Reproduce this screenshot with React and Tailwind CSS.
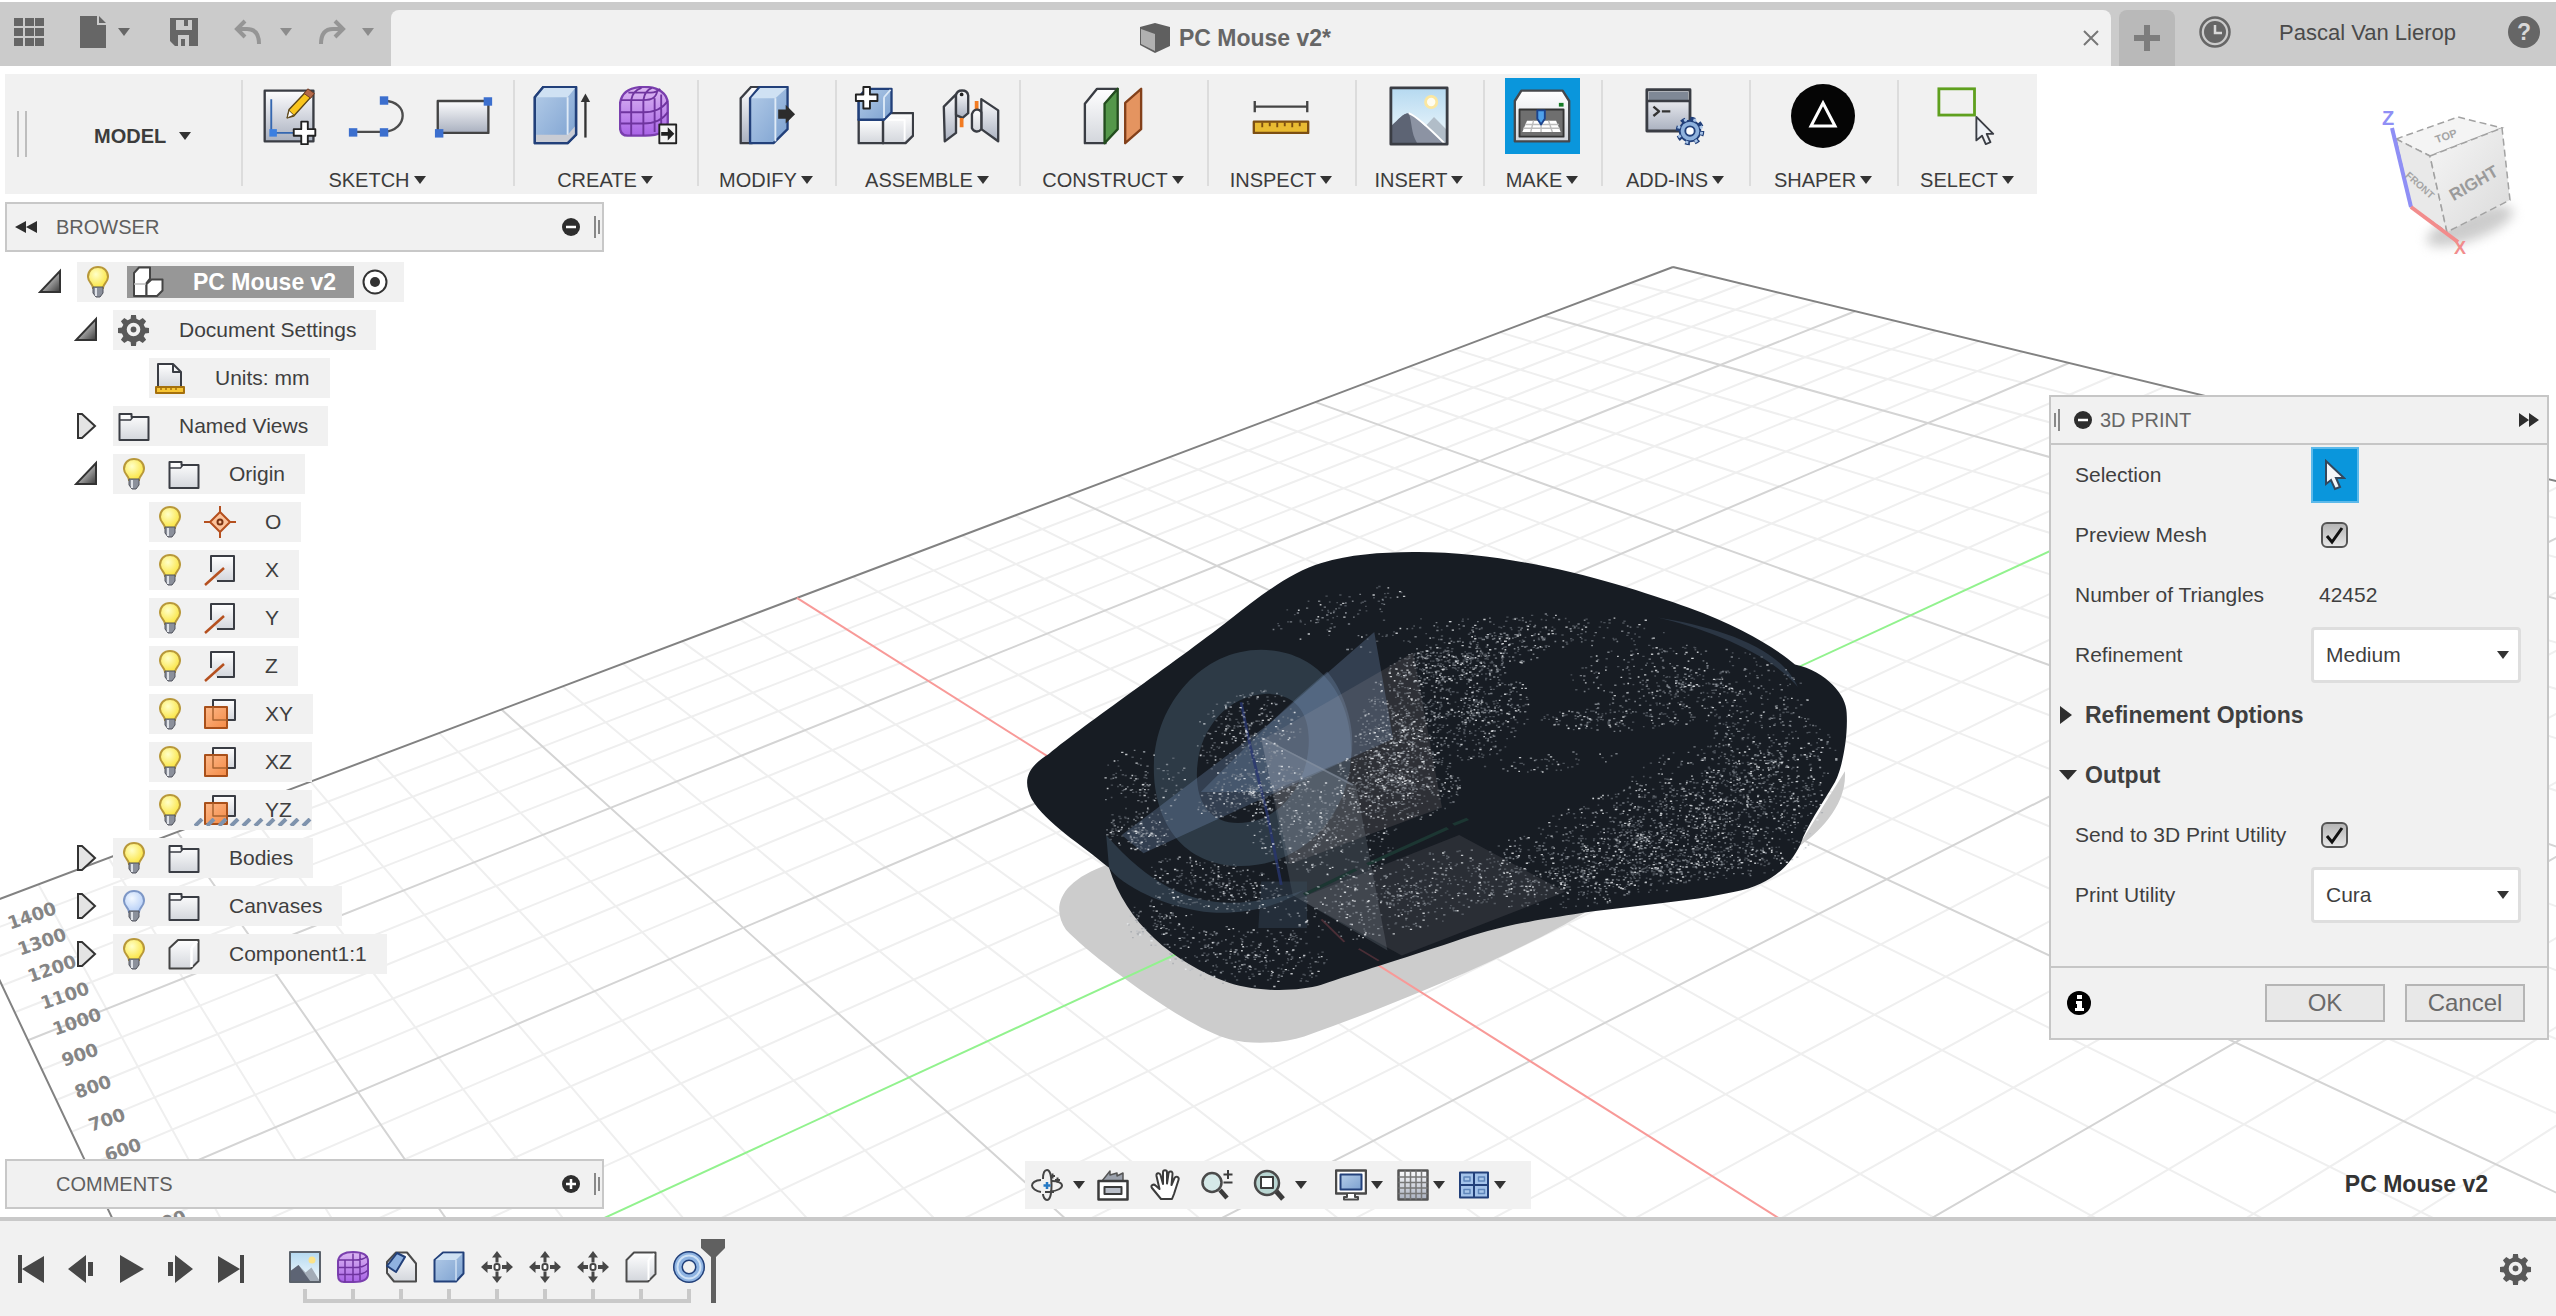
import React from "react";

/* ---------- shared gradients ---------- */

function Gradients() {
  return (
    <svg className="absolute h-0 w-0" aria-hidden="true">
      <defs>
        <linearGradient id="steel" x1="0" y1="0" x2="0" y2="1">
          <stop offset="0" stopColor="#fdfdfe" />
          <stop offset="1" stopColor="#a9b0bf" />
        </linearGradient>
        <linearGradient id="pale" x1="0" y1="0" x2="0" y2="1">
          <stop offset="0" stopColor="#ffffff" />
          <stop offset="1" stopColor="#d3d6dc" />
        </linearGradient>
        <linearGradient id="blue" x1="0" y1="0" x2="1" y2="1">
          <stop offset="0" stopColor="#b4cce8" />
          <stop offset="1" stopColor="#7ca1d0" />
        </linearGradient>
        <linearGradient id="sky" x1="0" y1="0" x2="0" y2="1">
          <stop offset="0" stopColor="#b5d9f0" />
          <stop offset="1" stopColor="#f3fafd" />
        </linearGradient>
        <linearGradient id="violet" x1="0" y1="0" x2="0" y2="1">
          <stop offset="0" stopColor="#dcb8f2" />
          <stop offset="1" stopColor="#a862e6" />
        </linearGradient>
        <linearGradient id="rust" x1="0" y1="0" x2="1" y2="1">
          <stop offset="0" stopColor="#fdb98a" />
          <stop offset="1" stopColor="#f48a45" />
        </linearGradient>
        <linearGradient id="wedge" x1="0" y1="0" x2="1" y2="1">
          <stop offset="0.3" stopColor="#cfcfcf" />
          <stop offset="1" stopColor="#3a3a3a" />
        </linearGradient>
        <linearGradient id="cube" x1="0" y1="0" x2="1" y2="1">
          <stop offset="0" stopColor="#f6f6f6" />
          <stop offset="1" stopColor="#dadada" />
        </linearGradient>
        <radialGradient id="glow" cx="0.4" cy="0.35" r="0.6">
          <stop offset="0" stopColor="#ffffc8" />
          <stop offset="1" stopColor="#fbe64a" />
        </radialGradient>
        <radialGradient id="cold" cx="0.4" cy="0.35" r="0.6">
          <stop offset="0" stopColor="#f2f8ff" />
          <stop offset="1" stopColor="#bcd3f8" />
        </radialGradient>
      </defs>
    </svg>
  );
}

function Icon({ className = "h-[60px] w-[60px]", children }) {
  return (
    <svg viewBox="0 0 64 64" className={className} aria-hidden="true" fill="none" strokeLinejoin="round">
      {children}
    </svg>
  );
}

function Caret({ className = "fill-[#333]" }) {
  return (
    <svg viewBox="0 0 12 8" className={"h-2 w-3 shrink-0 " + className} aria-hidden="true">
      <path d="M0 0h12L6 8z" />
    </svg>
  );
}

/* ---------- ribbon icons ---------- */

const DARK = "#3a3d44";
const NAVY = "#22407a";

const ribbonIcons = {
  sketch: (
    <Icon>
      <rect x="5" y="5" width="52" height="54" fill="url(#steel)" stroke={DARK} strokeWidth="2.5" />
      <path d="M12 14v36h26" stroke="#3567b0" strokeWidth="2" />
      <rect x="10" y="46" width="8" height="8" fill="#3b7fe0" />
      <path d="M29 34l2-9L50 5l6 5-20 22z" fill="#f9c51c" stroke="#5a4416" strokeWidth="1.5" />
      <path d="M31 26l5 5-7 3z" fill="#fff" stroke="#5a4416" />
      <path d="M47 8l4-5 7 5-4 5z" fill="#b4694a" stroke="#6e3a22" />
      <path d="M44 38h7v8h8v7h-8v9h-7v-9h-8v-7h8z" fill="#fff" stroke="#222" strokeWidth="2" />
    </Icon>
  ),
  line: (
    <Icon>
      <path d="M8 49h31C66 47 66 16 40 16" stroke="#4c4c4c" strokeWidth="2.5" />
      <rect x="2" y="45" width="9" height="9" fill="#3c6fce" />
      <rect x="35" y="45" width="9" height="9" fill="#3c6fce" />
      <rect x="35" y="11" width="9" height="9" fill="#3c6fce" />
    </Icon>
  ),
  rect: (
    <Icon>
      <rect x="4" y="16" width="54" height="34" fill="url(#steel)" stroke="#444" strokeWidth="2.5" />
      <rect x="53" y="12" width="9" height="9" fill="#3c6fce" />
      <rect x="1" y="46" width="9" height="9" fill="#3c6fce" />
    </Icon>
  ),
  extrude: (
    <Icon>
      <path d="M3 12l9-11h35v51l-9 9H3z" fill="url(#blue)" stroke={NAVY} strokeWidth="2.5" />
      <path d="M3 12l9-11h35l-9 11z" fill="#cfe1f3" />
      <path d="M4 52h34l8-9v8l-8 9H4z" fill="#c9ccd4" />
      <path d="M3 12l9-11h35v51l-9 9H3z" stroke={NAVY} strokeWidth="2.5" />
      <path d="M38 12v40" stroke="#dfeaf6" strokeWidth="2" />
      <path d="M57 55V14" stroke="#333" strokeWidth="2.5" />
      <path d="M52 17l5-9 5 9z" fill="#333" />
    </Icon>
  ),
  form: (
    <Icon>
      <path d="M1 20C2 6 12 1 27 1s25 7 25 18v20c0 9-9 14-24 14H9C3 53 1 49 1 43z" fill="url(#violet)" stroke="#7a3fae" strokeWidth="2.5" />
      <path d="M2 15h24c10 0 14-3 15-11M2 28h24c14 0 22-6 26-12M2 40h24c14 0 22-6 26-12M13 15v38M26 15v38M38 13v36M45 9v35M10 7h24c6 0 9-3 10-4M13 15C14 8 18 4 24 2M26 15c1-7 4-11 9-13" stroke="#6f349f" strokeWidth="2" />
      <rect x="43" y="41" width="18" height="20" fill="#f4f4f4" stroke="#222" strokeWidth="2" />
      <path d="M45 49h7v-5l7 7-7 7v-5h-7z" fill="#222" />
    </Icon>
  ),
  pull: (
    <Icon>
      <path d="M5 13L16 1h10v51l-9 9H5z" fill="url(#steel)" stroke={DARK} strokeWidth="2.5" />
      <path d="M15 13L25 1h30v45L40 61H15z" fill="url(#blue)" stroke={NAVY} strokeWidth="2.5" />
      <path d="M16 13L26 2h28L42 13z" fill="#cfe1f3" />
      <path d="M42 13v46" stroke="#dfeaf6" strokeWidth="2" />
      <path d="M45 25h8v-5l10 10-10 10v-5h-8z" fill="#2c2c2c" />
    </Icon>
  ),
  component: (
    <Icon>
      <path d="M5 12h30v24H5z" fill="url(#blue)" stroke={NAVY} strokeWidth="2.5" />
      <path d="M5 36h26v25H5z" fill="url(#pale)" stroke={DARK} strokeWidth="2.5" />
      <path d="M31 36l7-7h25v24l-8 8H31z" fill="url(#pale)" stroke={DARK} strokeWidth="2.5" />
      <path d="M34 36h20v22" stroke="#fff" strokeWidth="2" />
      <path d="M5 12l8-9h27v25l-8 8H5z" fill="url(#blue)" stroke={NAVY} strokeWidth="2.5" />
      <path d="M32 12v22M32 12l7-8" stroke="#dce9f7" strokeWidth="2" />
      <path d="M10 1h7v8h8v7h-8v8h-7v-8H2V9h8z" fill="#fff" stroke="#222" strokeWidth="2" />
    </Icon>
  ),
  joint: (
    <Icon>
      <path d="M3 22L16 9v41L4 59z" fill="url(#steel)" stroke={DARK} strokeWidth="2.5" />
      <path d="M16 10c1-7 12-7 13 0v19l-6 5-7-3z" fill="url(#steel)" stroke={DARK} strokeWidth="2.5" />
      <circle cx="22" cy="9" r="2" fill="#222" />
      <path d="M22 34v10M38 16v12" stroke="#f27b21" strokeWidth="4" />
      <path d="M43 14l18 12v33L43 46z" fill="url(#steel)" stroke={DARK} strokeWidth="2.5" />
      <path d="M33 30c2-6 8-6 10-2v18c-3 4-8 3-10-1z" fill="url(#pale)" stroke={DARK} strokeWidth="2.5" />
    </Icon>
  ),
  plane: (
    <Icon>
      <path d="M2 19L15 3h22L24 19v42H2z" fill="url(#pale)" stroke={DARK} strokeWidth="2.5" />
      <path d="M23 19L37 3v43L23 61z" fill="#54974a" stroke="#234d1e" strokeWidth="2.5" />
      <path d="M45 18L62 3v43L45 61z" fill="#e49460" stroke="#83401a" strokeWidth="2.5" />
    </Icon>
  ),
  measure: (
    <Icon>
      <path d="M4 22h56M4 16v12M60 16v12" stroke="#444" strokeWidth="2.5" />
      <rect x="3" y="38" width="58" height="12" fill="#e9bb32" stroke="#7d4f12" strokeWidth="2.5" />
      <path d="M12 39v5M20 39v4M28 39v5M36 39v4M44 39v5M52 39v4" stroke="#7d4f12" strokeWidth="2" />
    </Icon>
  ),
  picture: (
    <Icon>
      <rect x="2" y="2" width="60" height="60" fill="url(#sky)" />
      <path d="M34 48l14-15 13 13v16H34z" fill="#b1bdc8" />
      <circle cx="45" cy="17" r="6" fill="#fffdf0" stroke="#fbe7a0" strokeWidth="3" />
      <path d="M3 42C10 36 15 29 21 29c8 3 30 26 38 33H3z" fill="#8c93a3" />
      <path d="M3 42C10 36 15 29 21 29c4 10 2 20 9 32H3z" fill="#5d6474" />
      <path d="M21 29c8 3 28 22 38 32" stroke="#fff" strokeWidth="2" />
      <rect x="2" y="2" width="60" height="60" stroke={DARK} strokeWidth="3" />
    </Icon>
  ),
  printer: (
    <Icon>
      <path d="M3 16L10 5h44l7 11v43H3z" fill="url(#pale)" stroke="#46484c" strokeWidth="2.5" />
      <rect x="8" y="25" width="47" height="29" fill="#6f6f6f" stroke="#333" strokeWidth="2" />
      <path d="M16 37h31l5 12H11z" fill="#fff" />
      <path d="M14 41h36M12 45h39M23 37l-3 12M31 37v12M39 37l4 12" stroke="#bbb" strokeWidth="1.5" />
      <path d="M27 26h8v9l-4 6-4-6z" fill="#4fa1ea" stroke="#1b438d" strokeWidth="2" />
      <rect x="50" y="18" width="5" height="4" fill="#157a25" />
    </Icon>
  ),
  addins: (
    <Icon>
      <rect x="2" y="4" width="46" height="44" fill="url(#steel)" stroke={DARK} strokeWidth="3" />
      <rect x="4" y="6" width="42" height="9" fill="#7f8896" />
      <path d="M2 16h46" stroke={DARK} strokeWidth="2.5" />
      <path d="M9 22l6 5-6 5M18 27h9" stroke="#333" strokeWidth="2.5" />
      <circle cx="48" cy="48" r="11" fill="#8fb2dd" stroke={NAVY} strokeWidth="2" />
      <circle cx="48" cy="48" r="13" stroke={NAVY} strokeWidth="4.5" strokeDasharray="5 5.2" />
      <circle cx="48" cy="48" r="12.5" stroke="#a9c5e8" strokeWidth="3" strokeDasharray="3 7.2" strokeDashoffset="-1" />
      <circle cx="48" cy="48" r="5" fill="#fff" stroke={NAVY} strokeWidth="2" />
    </Icon>
  ),
  shaper: (
    <Icon className="h-16 w-16">
      <circle cx="32" cy="32" r="32" fill="#050505" />
      <path d="M32 19l12 23H20z" stroke="#fff" strokeWidth="3" strokeLinejoin="miter" />
    </Icon>
  ),
  select: (
    <Icon>
      <rect x="2" y="3" width="38" height="28" stroke="#5fa01e" strokeWidth="3" strokeLinejoin="miter" />
      <path d="M42 33v25l6-5 4 9 5-2-4-9h7z" fill="#eef1f6" stroke="#3a3d44" strokeWidth="2" />
    </Icon>
  ),
};

const ribbon = [
  { label: "SKETCH", width: "w-[272px]", tools: [["sketch", "Create sketch"], ["line", "Line"], ["rect", "Rectangle"]] },
  { label: "CREATE", width: "w-[184px]", tools: [["extrude", "Extrude"], ["form", "Create form"]] },
  { label: "MODIFY", width: "w-[138px]", tools: [["pull", "Press pull"]] },
  { label: "ASSEMBLE", width: "w-[184px]", tools: [["component", "New component"], ["joint", "Joint"]] },
  { label: "CONSTRUCT", width: "w-[188px]", tools: [["plane", "Offset plane"]] },
  { label: "INSPECT", width: "w-[148px]", tools: [["measure", "Measure"]] },
  { label: "INSERT", width: "w-[128px]", tools: [["picture", "Attached canvas"]] },
  { label: "MAKE", width: "w-[118px]", tools: [["printer", "3D print"]], active: true },
  { label: "ADD-INS", width: "w-[148px]", tools: [["addins", "Scripts and add-ins"]] },
  { label: "SHAPER", width: "w-[148px]", tools: [["shaper", "Shaper utilities"]] },
  { label: "SELECT", width: "w-[140px]", tools: [["select", "Select"]] },
];

/* ---------- top bar ---------- */

function TopBar() {
  return (
    <header className="flex h-[64px] items-stretch bg-[#cbcbcb]">
      <div className="flex w-[391px] items-center pb-1 pl-[14px]">
        <button aria-label="Data panel" className="mr-[36px]">
          <svg viewBox="0 0 30 28" className="h-7 w-[30px] fill-[#666]">
            {[0, 10, 20].map((y) => [0, 11, 21].map((x) => <rect key={x + "-" + y} x={x} y={y} width="9" height="8" />))}
          </svg>
        </button>
        <button aria-label="File" className="mr-10 flex items-center gap-3">
          <svg viewBox="0 0 26 32" className="h-8 w-[26px] fill-[#666]">
            <path d="M0 0h17v9h9v23H0zM19 0l7 7h-7z" />
          </svg>
          <Caret className="fill-[#666]" />
        </button>
        <button aria-label="Save" className="mr-9">
          <svg viewBox="0 0 28 28" className="h-7 w-7 fill-[#666]">
            <path fillRule="evenodd" d="M0 0h28v28H5l-5-5zM6 2v10h16V2h-4v6h-4V2zM8 17v11h3v-7h4v7h4V17z" />
          </svg>
        </button>
        <button aria-label="Undo" className="mr-[26px] flex items-center gap-[18px]">
          <svg viewBox="0 0 28 26" className="h-[26px] w-7 fill-none stroke-[#959595] stroke-[4]">
            <path d="M11 2L3 10l8 8M3 10h10c8 0 12 5 12 15" />
          </svg>
          <Caret className="fill-[#8c8c8c]" />
        </button>
        <button aria-label="Redo" className="flex items-center gap-[16px]">
          <svg viewBox="0 0 28 26" className="h-[26px] w-7 fill-none stroke-[#959595] stroke-[4]">
            <path d="M17 2l8 8-8 8M25 10H15C7 10 3 15 3 25" />
          </svg>
          <Caret className="fill-[#8c8c8c]" />
        </button>
      </div>
      <div className="mt-2 flex flex-1 items-center rounded-t-lg bg-[#f1f1f1] pr-2">
        <div className="flex flex-1 items-center justify-center gap-2 text-[23px] font-bold text-[#666]">
          <svg viewBox="0 0 32 32" className="h-8 w-8">
            <path d="M1 5l15-4 15 4v19L16 31 1 23z" fill="#5f5f5f" />
            <path d="M2 7l14 5v17L2 22z" fill="#b0b0b0" />
          </svg>
          PC Mouse v2*
        </div>
        <button aria-label="Close tab" className="p-1">
          <svg viewBox="0 0 16 16" className="h-4 w-4 stroke-[#777] stroke-2">
            <path d="M1 1l14 14M15 1L1 15" />
          </svg>
        </button>
      </div>
      <button aria-label="New tab" className="mt-2 ml-2 flex w-14 items-center justify-center rounded-t-lg bg-[#b9b9b9]">
        <svg viewBox="0 0 26 26" className="h-[26px] w-[26px] fill-[#7d7d7d]">
          <path d="M10 0h6v10h10v6H16v10h-6V16H0v-6h10z" />
        </svg>
      </button>
      <div className="flex items-center pr-[16px] pb-1 pl-6">
        <button aria-label="Job status">
          <svg viewBox="0 0 32 32" className="h-8 w-8">
            <circle cx="16" cy="16" r="14.5" fill="none" stroke="#666" strokeWidth="2.5" />
            <circle cx="16" cy="16" r="11" fill="#666" />
            <path d="M16 9v8h7" fill="none" stroke="#d8d8d8" strokeWidth="2.5" />
          </svg>
        </button>
        <button className="mr-[52px] ml-12 text-[22px] text-[#4a4a4a]">Pascal Van Lierop</button>
        <button aria-label="Help" className="flex h-8 w-8 items-center justify-center rounded-full bg-[#666] text-[23px] font-bold text-[#d8d8d8]">?</button>
      </div>
    </header>
  );
}

function Ribbon() {
  return (
    <nav className="mt-2 ml-[5px] flex h-[120px] self-start bg-[#f1f1f1]">
      <div className="flex w-[236px] items-center">
        <div className="ml-3 h-[46px] w-[10px] border-x-2 border-[#bdbdbd]" />
        <button className="mt-1 ml-[67px] flex items-center gap-[13px] text-[20px] font-bold text-[#3c3c3c]">
          MODEL <Caret />
        </button>
      </div>
      {ribbon.map((group) => (
        <div key={group.label} className="flex">
          <div className="mt-[6px] h-[106px] w-[2px] bg-[#dcdcdc]" />
          <div className={"-ml-[2px] flex flex-col items-center pt-1 " + group.width}>
            <div className="flex gap-3">
              {group.tools.map(([icon, name]) => (
                <button
                  key={icon}
                  aria-label={name}
                  className={"flex h-[76px] w-[75px] items-center justify-center " + (group.active ? "bg-[#0a96dc]" : "")}
                >
                  {ribbonIcons[icon]}
                </button>
              ))}
            </div>
            <button className="mt-3 flex h-7 items-center gap-1 text-[20px] text-[#3c3c3c]">
              {group.label} <Caret />
            </button>
          </div>
        </div>
      ))}
    </nav>
  );
}

/* ---------- browser tree ---------- */

function Bulb({ off }) {
  return (
    <svg viewBox="0 0 22 32" className="h-8 w-[22px]" aria-hidden="true">
      <path d="M11 1c6 0 10 4 10 10 0 5-5 7-5 11H6c0-4-5-6-5-11C1 5 5 1 11 1z" fill={off ? "url(#cold)" : "url(#glow)"} stroke={off ? "#7d97c6" : "#b8983a"} strokeWidth="2" />
      <path d="M6 21h10v6l-3 4H9l-3-4z" fill="#8b909b" stroke="#50535c" />
      <path d="M9 22v8" stroke="#dfe2e8" strokeWidth="2" />
    </svg>
  );
}

const GEAR = "M27 2h10l1 8 6 3 7-5 7 7-5 7 3 6 8 1v10l-8 1-3 6 5 7-7 7-7-5-6 3-1 8H27l-1-8-6-3-7 5-7-7 5-7-3-6-8-1V29l8-1 3-6-5-7 7-7 7 5 6-3zM32 18a14 14 0 1 0 0 28 14 14 0 1 0 0-28z";

function Gear({ className }) {
  return (
    <svg viewBox="0 0 66 66" className={className} aria-hidden="true">
      <path fillRule="evenodd" d={GEAR} fill="#595959" />
      <circle cx="32" cy="32" r="6" fill="#595959" />
    </svg>
  );
}

const treeSize = "h-8 w-8";
const treeIcons = {
  assembly: (
    <Icon className={treeSize}>
      <path d="M4 14L14 3h22v22l-7 9v26H4z" fill="#fff" stroke="#444" strokeWidth="4" />
      <path d="M29 60V36l10-9h22v22L50 60z" fill="#fff" stroke="#444" strokeWidth="4" />
      <path d="M4 36h24" stroke="#bbb" strokeWidth="3" />
    </Icon>
  ),
  gear: <Gear className="h-8 w-8" />,
  units: (
    <Icon className={treeSize}>
      <path d="M8 50V4h30l16 16v30" fill="url(#pale)" stroke={DARK} strokeWidth="4" />
      <path d="M38 4v16h16" stroke={DARK} strokeWidth="4" />
      <rect x="4" y="50" width="56" height="12" fill="#f7c533" stroke="#a5700c" strokeWidth="4" />
      <path d="M14 51v5M24 51v5M34 51v5M44 51v5" stroke="#a5700c" strokeWidth="3" />
    </Icon>
  ),
  folder: (
    <Icon className={treeSize}>
      <path d="M3 8h24v6h34v46H3z" fill="url(#pale)" stroke={DARK} strokeWidth="4" />
      <path d="M3 20h22l4-5" stroke={DARK} strokeWidth="3" />
    </Icon>
  ),
  point: (
    <Icon className={treeSize}>
      <path d="M32 12l20 20-20 20-20-20z" fill="#fcc39b" stroke="#b5501f" strokeWidth="4" />
      <path d="M32 0v14M32 50v14M0 32h14M50 32h14" stroke="#b5501f" strokeWidth="4" />
      <circle cx="32" cy="32" r="5" stroke="#7a3312" strokeWidth="4" />
    </Icon>
  ),
  axis: (
    <Icon className={treeSize}>
      <path d="M14 36V4h46v50H26" fill="url(#pale)" />
      <path d="M14 36V4h46v50H26" stroke={DARK} strokeWidth="4" />
      <path d="M2 62L40 28" stroke="#b5501f" strokeWidth="5" />
    </Icon>
  ),
  plane: (
    <Icon className={treeSize}>
      <rect x="18" y="4" width="44" height="40" fill="url(#pale)" stroke={DARK} strokeWidth="4" />
      <rect x="2" y="18" width="44" height="42" fill="url(#rust)" stroke="#a9501a" strokeWidth="4" />
      <path d="M18 18v26h28" stroke="#a9632f" strokeWidth="3" />
    </Icon>
  ),
  body: (
    <Icon className="h-8 w-8">
      <path d="M3 20L20 4h41v42L46 61H3z" fill="url(#pale)" stroke="#444" strokeWidth="4" />
      <path d="M47 20L58 7M47 20v38" stroke="#fff" strokeWidth="5" />
    </Icon>
  ),
};

const tree = [
  { name: "PC Mouse v2", level: 0, open: true, bulb: "on", icon: "assembly", root: true },
  { name: "Document Settings", level: 1, open: true, icon: "gear" },
  { name: "Units: mm", level: 2, icon: "units" },
  { name: "Named Views", level: 1, open: false, icon: "folder" },
  { name: "Origin", level: 1, open: true, bulb: "on", icon: "folder" },
  { name: "O", level: 2, bulb: "on", icon: "point" },
  { name: "X", level: 2, bulb: "on", icon: "axis" },
  { name: "Y", level: 2, bulb: "on", icon: "axis" },
  { name: "Z", level: 2, bulb: "on", icon: "axis" },
  { name: "XY", level: 2, bulb: "on", icon: "plane" },
  { name: "XZ", level: 2, bulb: "on", icon: "plane" },
  { name: "YZ", level: 2, bulb: "on", icon: "plane", dashed: true },
  { name: "Bodies", level: 1, open: false, bulb: "on", icon: "folder" },
  { name: "Canvases", level: 1, open: false, bulb: "off", icon: "folder" },
  { name: "Component1:1", level: 1, open: false, bulb: "on", icon: "body" },
];

const indents = ["ml-[38px]", "ml-[74px]", "ml-[110px]"];

function TreeRow({ item }) {
  return (
    <li className={"flex h-10 items-center " + indents[item.level]}>
      <div className="flex w-[39px] shrink-0">
        {item.open !== undefined && (
          <button aria-label={"Toggle " + item.name} aria-expanded={item.open}>
            <svg viewBox="0 0 24 28" className="h-7 w-6">
              {item.open ? (
                <path d="M22 3v21H2z" fill="url(#wedge)" stroke="#333" strokeWidth="2" />
              ) : (
                <path d="M4 2h4l13 12L8 26H4z" fill="#e4e4e4" stroke="#333" strokeWidth="2" />
              )}
            </svg>
          </button>
        )}
      </div>
      <div className="relative flex h-10 items-center bg-[#f1f1f1] pl-1">
        {item.bulb && (
          <button aria-label={"Visibility of " + item.name} className="mr-3 flex w-[34px] justify-center">
            <Bulb off={item.bulb === "off"} />
          </button>
        )}
        {item.root ? (
          <>
            <div className="flex h-8 items-center bg-[#979797] pr-[18px] pl-1 text-[23px] font-bold text-white">
              <span className="mr-7 flex w-[34px] justify-center">{treeIcons[item.icon]}</span>
              {item.name}
            </div>
            <button aria-label="Activate" className="mr-4 ml-2">
              <svg viewBox="0 0 26 26" className="h-[26px] w-[26px]">
                <circle cx="13" cy="13" r="11.5" fill="#fff" stroke="#333" strokeWidth="2" />
                <circle cx="13" cy="13" r="5" fill="#333" />
              </svg>
            </button>
          </>
        ) : (
          <div className={"flex items-center pr-5 text-[21px] text-[#3f3f3f] " + (item.bulb ? "pl-1" : "")}>
            <span className="mr-7 flex w-[34px] justify-center">{treeIcons[item.icon]}</span>
            {item.name}
          </div>
        )}
        {item.dashed && (
          <svg className="absolute right-0 bottom-1 h-2 w-[118px]" viewBox="0 0 118 8" aria-hidden="true">
            <path d="M1 8l7-7M13 8l7-7M25 8l7-7M37 8l7-7M49 8l7-7M61 8l7-7M73 8l7-7M85 8l7-7M97 8l7-7M109 8l7-7" stroke="#7f93ad" strokeWidth="4" />
          </svg>
        )}
      </div>
    </li>
  );
}

function RoundSign({ plus }) {
  return (
    <svg viewBox="0 0 18 18" className="h-[18px] w-[18px]" aria-hidden="true">
      <circle cx="9" cy="9" r="9" fill="#2e2e2e" />
      <path d={plus ? "M4 9h10M9 4v10" : "M4 9h10"} stroke="#fff" strokeWidth="2.5" />
    </svg>
  );
}

function DockBar({ title, plus, collapse }) {
  return (
    <div className="ml-[5px] flex h-[50px] w-[599px] items-center border-2 border-[#c8c8c8] bg-[#f1f1f1] text-[20px] text-[#5f5f5f]">
      <div className="flex w-[49px] pl-2">
        {collapse && (
          <button aria-label="Collapse browser">
            <svg viewBox="0 0 22 12" className="h-3 w-[22px] fill-[#2e2e2e]">
              <path d="M11 0v12L0 6zM22 0v12L11 6z" />
            </svg>
          </button>
        )}
      </div>
      <h2 className="flex-1">{title}</h2>
      <button aria-label={(plus ? "Expand " : "Minimise ") + title} className="mr-[14px]">
        <RoundSign plus={plus} />
      </button>
      <div className="mr-[2px] flex h-[22px] items-center gap-[2px]">
        <div className="h-[22px] w-[2px] bg-[#888]" />
        <div className="h-[14px] w-[2px] bg-[#888]" />
      </div>
    </div>
  );
}

/* ---------- 3D print panel ---------- */

function PanelSelect({ id, options }) {
  return (
    <div className="relative h-14 w-[210px]">
      <select id={id} className="h-14 w-full appearance-none rounded-sm border-[3px] border-[#dedede] bg-white pl-3 text-[21px] text-[#3f3f3f]">
        {options.map((o) => (
          <option key={o}>{o}</option>
        ))}
      </select>
      <span className="pointer-events-none absolute top-6 right-3">
        <Caret />
      </span>
    </div>
  );
}

function PanelCheck({ id }) {
  return (
    <div className="relative ml-[10px] h-[26px] w-[27px]">
      <input id={id} type="checkbox" defaultChecked className="h-[26px] w-[27px] appearance-none rounded-md border-2 border-[#555] bg-linear-to-b from-[#b5b5b5] to-[#e6e6e6]" />
      <svg viewBox="0 0 27 26" className="pointer-events-none absolute inset-0" aria-hidden="true">
        <path d="M6 14l5 6L21 6" fill="none" stroke="#111" strokeWidth="3" />
      </svg>
    </div>
  );
}

function PanelRow({ label, htmlFor, children }) {
  return (
    <div className="flex h-[60px] items-center pl-[24px]">
      <label htmlFor={htmlFor} className="w-[236px]">{label}</label>
      {children}
    </div>
  );
}

function PanelSection({ label, open }) {
  return (
    <button aria-expanded={open} className="flex h-[60px] items-center pl-2 text-[23px] font-bold">
      <svg viewBox="0 0 18 18" className="mr-2 h-[18px] w-[18px] fill-[#2e2e2e]" aria-hidden="true">
        <path d={open ? "M0 4h18l-9 10z" : "M1 0l12 9-12 9z"} />
      </svg>
      {label}
    </button>
  );
}

function PrintPanel() {
  return (
    <section className="mt-[193px] mr-[7px] w-[500px] self-start border-2 border-[#c6c6c6] bg-[#f1f1f1] text-[21px] text-[#3f3f3f]">
      <div className="flex h-12 items-center border-b-2 border-[#c6c6c6] pr-2 pl-[3px] text-[20px] text-[#666]">
        <div className="flex items-center gap-[2px]">
          <div className="h-[14px] w-[2px] bg-[#888]" />
          <div className="h-[22px] w-[2px] bg-[#888]" />
        </div>
        <button aria-label="Minimise" className="mr-2 ml-[14px]">
          <RoundSign />
        </button>
        <h2 className="flex-1">3D PRINT</h2>
        <button aria-label="Undock">
          <svg viewBox="0 0 20 14" className="h-[14px] w-5 fill-[#2e2e2e]">
            <path d="M0 0v14l10-7zM10 0v14l10-7z" />
          </svg>
        </button>
      </div>
      <div className="flex h-[521px] flex-col">
        <PanelRow label="Selection" htmlFor="selection">
          <button id="selection" aria-label="Selection" className="flex h-14 w-12 items-center justify-center border-2 border-[#5cb9ea] bg-[#0a96dc]">
            <svg viewBox="0 0 22 32" className="h-8 w-[22px]">
              <path d="M2 2v23l5-4 4 9 5-2-4-9h8z" fill="#f4f6f9" stroke="#33475c" strokeWidth="2" />
            </svg>
          </button>
        </PanelRow>
        <PanelRow label="Preview Mesh" htmlFor="preview"><PanelCheck id="preview" /></PanelRow>
        <PanelRow label="Number of Triangles"><output className="pl-2">42452</output></PanelRow>
        <PanelRow label="Refinement" htmlFor="refinement"><PanelSelect id="refinement" options={["Medium", "High", "Low"]} /></PanelRow>
        <PanelSection label="Refinement Options" open={false} />
        <PanelSection label="Output" open />
        <PanelRow label="Send to 3D Print Utility" htmlFor="send"><PanelCheck id="send" /></PanelRow>
        <PanelRow label="Print Utility" htmlFor="utility"><PanelSelect id="utility" options={["Cura", "Meshmixer"]} /></PanelRow>
      </div>
      <div className="flex h-[72px] items-center border-t-2 border-[#c6c6c6] pr-[22px] pl-4 text-[24px] text-[#6a6a6a]">
        <button aria-label="Information">
          <svg viewBox="0 0 24 24" className="h-6 w-6">
            <circle cx="12" cy="12" r="12" fill="#000" />
            <path d="M10 4h5v4h-5zM9 10h6v7h2v3H8v-3h2v-4H9z" fill="#fff" />
          </svg>
        </button>
        <button className="ml-auto h-[38px] w-[120px] border-2 border-[#b5b5b5] bg-[#e8e8e8] leading-none">OK</button>
        <button className="ml-5 h-[38px] w-[120px] border-2 border-[#b5b5b5] bg-[#e8e8e8] leading-none">Cancel</button>
      </div>
    </section>
  );
}

/* ---------- 3D scene ---------- */

/* Ground-plane cell (u, v) to screen. */
function project(u, v) {
  const w = 1 - 0.014845 * u - 0.007663 * v;
  return [(1673 + 8.886 * u - 54.779 * v) / w, (267 + 4.211 * u + 13.803 * v) / w];
}

function segment(a, b) {
  const [x1, y1] = project(a[0], a[1]);
  const [x2, y2] = project(b[0], b[1]);
  return `M${x1.toFixed(1)} ${y1.toFixed(1)}L${x2.toFixed(1)} ${y2.toFixed(1)}`;
}

const U_MAX = 30;
const V_MAX = 31;

function buildGrid() {
  const minor = [];
  const major = [];
  for (let u = 1; u < U_MAX; u++) {
    if (u !== 15) (u % 5 === 0 ? major : minor).push(segment([u, 0], [u, V_MAX]));
  }
  for (let v = 1; v < V_MAX; v++) {
    if (v !== 18) (v % 5 === 3 ? major : minor).push(segment([0, v], [U_MAX, v]));
  }
  return { minor: minor.join(""), major: major.join("") };
}

const grid = buildGrid();

/* Fields where the mesh lines open up: centre, radii, tilt in degrees, count. */
const fields = [
  [1200, 480, 210, 120, 10, 480],
  [1120, 930, 330, 150, -28, 1300],
  [1120, 1020, 260, 50, -12, 350],
  [1340, 700, 120, 150, 0, 400],
  [1250, 850, 180, 200, 0, 450],
  [820, 400, 140, 60, -20, 380],
  [700, 610, 80, 230, 8, 800],
  [830, 560, 90, 140, 10, 420],
  [690, 760, 110, 120, -20, 560],
  [560, 900, 130, 140, -20, 460],
  [430, 620, 90, 130, 15, 320],
  [440, 790, 110, 60, -30, 300],
  [240, 910, 60, 50, 30, 150],
  [250, 780, 80, 120, 0, 130],
  [380, 1060, 130, 70, 25, 260],
  [430, 1270, 140, 90, 10, 300],
  [280, 1160, 60, 80, 20, 110],
  [700, 1090, 240, 100, -25, 520],
  [590, 270, 130, 60, -25, 90],
  [760, 330, 170, 50, -12, 80],
  [980, 320, 180, 50, 0, 130],
  [1060, 580, 120, 35, 0, 130],
  [960, 700, 120, 30, -10, 50],
];

function buildSpeckles() {
  let seed = 7;
  const rnd = () => {
    seed = (seed * 1664525 + 1013904223) % 4294967296;
    return seed / 4294967296;
  };
  const layers = ["", "", ""];
  fields.forEach(([cx, cy, rx, ry, deg, count]) => {
    const a = (deg * Math.PI) / 180;
    for (let i = 0; i < count; i++) {
      const t = rnd() * Math.PI * 2;
      const r = Math.pow(rnd(), 0.75);
      const px = Math.cos(t) * rx * r;
      const py = Math.sin(t) * ry * r;
      const x = Math.round(cx + px * Math.cos(a) - py * Math.sin(a));
      const y = Math.round(cy + px * Math.sin(a) + py * Math.cos(a));
      layers[i % 7 === 0 ? 2 : i % 3 === 0 ? 1 : 0] += `M${x} ${y}h${i % 2 ? 3 : 4}`;
    }
  });
  return layers;
}

const speckles = buildSpeckles();

const BODY =
  "M720 93C900 90 1090 190 1200 255C1290 310 1350 370 1385 420C1440 440 1475 510 1475 560C1478 640 1465 730 1455 760C1430 830 1405 890 1395 940C1375 1010 1340 1060 1280 1080C1200 1110 1100 1120 1000 1145C900 1170 850 1190 790 1225C700 1275 620 1315 560 1350C520 1370 450 1372 400 1345C300 1285 220 1170 190 1010C140 940 80 880 55 810C40 760 45 720 85 680C150 590 300 420 400 290C460 210 510 150 560 125C610 100 660 94 720 93Z";

const ruler = [
  [1400, 32, 916], [1300, 42, 942], [1200, 52, 969], [1100, 65, 996], [1000, 77, 1022],
  [900, 80, 1055], [800, 93, 1087], [700, 107, 1120], [600, 123, 1150], [500, 168, 1222],
];

function Scene() {
  return (
    <svg viewBox="0 66 2556 1151" preserveAspectRatio="xMidYMid slice" className="absolute inset-0 h-full w-full" aria-label="Model view" role="img">
      <path d={grid.minor} stroke="#efefef" strokeWidth="2" fill="none" />
      <path d={grid.major} stroke="#d4d4d4" strokeWidth="2" fill="none" />
      <path d={segment([0, V_MAX], [0, 0]) + segment([0, 0], [U_MAX, 0]) + segment([0, V_MAX], [U_MAX, V_MAX])} stroke="#828282" strokeWidth="2" fill="none" />
      <g fill="#858585" fontSize="18" fontWeight="bold" fontFamily="DejaVu Sans, sans-serif" textAnchor="middle">
        {ruler.map(([n, x, y]) => (
          <text key={n} x={x} y={y + 6} transform={`rotate(-19 ${x} ${y})`}>{n}</text>
        ))}
      </g>
      <g transform="translate(1000 520) scale(0.574 0.3443)">
        <path d="M190 1000C100 1050 90 1130 115 1190C160 1270 330 1480 400 1508C440 1525 490 1520 530 1500C700 1400 900 1260 1020 1140ZM1472 730C1476 830 1425 910 1390 950Z" fill="#cccccc" />
      </g>
      <path d={segment([0, 18], [U_MAX, 18])} stroke="#f89a98" strokeWidth="2" />
      <path d={segment([15, 0], [15, V_MAX])} stroke="#92f28e" strokeWidth="2" />
      <g transform="translate(1000 520) scale(0.574 0.3443)">
        <path d={BODY} fill="#171c23" />
        <path d="M455 377C550 377 612 500 612 670C612 850 530 1005 420 1005C320 1005 268 880 268 720C268 540 350 377 455 377ZM465 505C390 510 343 620 343 740C343 830 370 880 415 880C490 880 538 760 538 640C538 550 510 505 465 505Z" fillRule="evenodd" fill="#2d3a46" />
        <path d="M185 915C260 1060 330 1110 400 1112C450 1110 500 1095 530 1075C490 1120 430 1145 370 1140C290 1130 210 1060 190 1010Z" fill="#2c3946" />
        <path d="M1145 283C1250 310 1360 370 1390 485C1340 385 1230 315 1145 283Z" fill="#2b3644" />
        <path d="M652 325L685 635L250 968L212 915L470 590Z" fill="#7d9bc6" opacity="0.28" />
        <path d="M515 520L570 440C600 500 620 600 612 690L470 790L350 790L470 590Z" fill="#8fabd8" opacity="0.22" />
        <path d="M455 640L720 385L770 835L505 1000Z" fill="#d8c8c8" opacity="0.12" />
        <path d="M455 630L620 770L675 1250L510 1090Z" fill="#d0dce8" opacity="0.14" />
        <path d="M800 915L985 1080L700 1265L520 1100Z" fill="#d4ccd4" opacity="0.1" />
        <path d="M455 1050H535V1185H450Z" fill="#3a4a5c" opacity="0.4" />
        <path d="M530 1088L620 1015M640 1000L780 895M790 885L815 868" stroke="#1c3632" strokeWidth="8" />
        <path d="M420 530L435 650L465 850L490 1060" fill="none" stroke="#28366f" strokeWidth="5" opacity="0.8" />
        <path d="M455 632L615 770" stroke="#8791a0" strokeWidth="4" opacity="0.6" />
        <path d="M560 1160L600 1225M625 1245L660 1280" stroke="#4a2e36" strokeWidth="4" />
        <path d={speckles[0]} stroke="#8b929b" strokeWidth="4" opacity="0.45" />
        <path d={speckles[1]} stroke="#b5bbc2" strokeWidth="4" opacity="0.6" />
        <path d={speckles[2]} stroke="#eceff2" strokeWidth="4" opacity="0.8" />
      </g>
    </svg>
  );
}

function ViewCube() {
  return (
    <svg viewBox="0 0 160 160" className="absolute top-[36px] right-[16px] h-40 w-40" role="img" aria-label="View cube">
      <ellipse cx="90" cy="124" rx="46" ry="14" fill="#9a9a9a" opacity="0.5" transform="rotate(-20 90 124)" className="blur-[6px]" />
      <g stroke="#a2a2a2" strokeWidth="1.5" strokeDasharray="7 4">
        <path d="M16 37L78 15L122 26L50 54Z" fill="#f4f4f4" />
        <path d="M16 37L50 54L67 130L31 105Z" fill="#e9e9e9" />
        <path d="M50 54L122 26L130 98L67 130Z" fill="url(#cube)" />
      </g>
      <path d="M12 26L31 105" stroke="#8f8ff5" strokeWidth="4" />
      <path d="M31 105L78 140" stroke="#f28c8c" strokeWidth="4" />
      <g fontFamily="Liberation Sans, sans-serif" fontWeight="bold" textAnchor="middle">
        <text x="8" y="23" fontSize="20" fill="#8f8ff5">Z</text>
        <text x="80" y="152" fontSize="18" fill="#f28c8c">X</text>
        <text x="93" y="87" fontSize="17" fill="#9b9b9b" transform="rotate(-30 93 80)">RIGHT</text>
        <text x="41" y="87" fontSize="10" fill="#a5a5a5" transform="rotate(42 41 82)">FRONT</text>
        <text x="66" y="38" fontSize="11" fill="#a5a5a5" transform="rotate(-20 66 34)">TOP</text>
      </g>
    </svg>
  );
}

/* ---------- navigation bar ---------- */

const navSize = "h-8 w-8";
const navItems = [
  {
    name: "Orbit", caret: true, margin: "mr-3", art: (
      <Icon className={navSize}>
        <path d="M20 22C8 22 2 28 2 33s8 12 18 13M42 24c12 0 20 4 20 9s-8 11-24 12" stroke="#444" strokeWidth="4" />
        <path d="M24 20C24 6 28 2 32 2s9 6 9 30-5 30-9 30-8-6-8-12" stroke="#444" strokeWidth="4" />
        <path d="M32 26v14M25 33h14" stroke="#2679c4" strokeWidth="5" />
        <path d="M38 14h10M43 9v10M48 22h10M53 17v10M28 46h18" stroke="#444" strokeWidth="4" />
      </Icon>
    ),
  },
  {
    name: "Look at", margin: "mr-[21px]", art: (
      <Icon className={navSize}>
        <path d="M10 24L26 4v8l14-4v6l12-6v16z" fill="#9aa0ab" stroke="#555" strokeWidth="3" />
        <rect x="3" y="24" width="58" height="37" fill="#fff" stroke="#3c3c3c" strokeWidth="5" />
        <rect x="15" y="36" width="34" height="14" fill="#b9bec8" stroke="#3c3c3c" strokeWidth="4" />
      </Icon>
    ),
  },
  {
    name: "Pan", margin: "mr-[19px]", art: (
      <Icon className={navSize}>
        <path d="M22 60L4 38c-4-5 3-9 7-5l8 7-6-26c-1-6 6-8 8-2l5 18V7c0-6 8-6 8 0v22l3-20c1-6 9-5 8 1l-2 22 6-14c3-5 10-2 8 4l-9 28-4 10z" fill="#fff" stroke="#3c3c3c" strokeWidth="4" />
      </Icon>
    ),
  },
  {
    name: "Zoom", margin: "mr-[20px]", art: (
      <Icon className={navSize}>
        <path d="M38 42l14 16" stroke="#3c3c3c" strokeWidth="9" />
        <circle cx="22" cy="27" r="19" fill="#d5e9e8" stroke="#4a4a4a" strokeWidth="5" />
        <path d="M54 2v18M45 11h18M45 27h18" stroke="#3c3c3c" strokeWidth="4" />
      </Icon>
    ),
  },
  {
    name: "Fit", caret: true, gap: "gap-[10px]", margin: "mr-[28px]", art: (
      <Icon className={navSize}>
        <path d="M46 44l14 16" stroke="#3c3c3c" strokeWidth="10" />
        <circle cx="28" cy="28" r="24" fill="#b9d6d2" stroke="#4a4a4a" strokeWidth="5" />
        <rect x="16" y="16" width="24" height="22" fill="#fff" stroke="#3c3c3c" strokeWidth="4" />
      </Icon>
    ),
  },
  {
    name: "Display settings", caret: true, gap: "gap-1", margin: "mr-[14px]", art: (
      <Icon className={navSize}>
        <rect x="2" y="3" width="60" height="46" fill="#fff" stroke="#4a4a4a" strokeWidth="5" />
        <rect x="11" y="11" width="42" height="30" fill="url(#blue)" stroke={NAVY} strokeWidth="4" />
        <path d="M24 50v6h-6v5h28v-5h-6v-6" fill="#fff" stroke="#4a4a4a" strokeWidth="4" />
      </Icon>
    ),
  },
  {
    name: "Grid and snaps", caret: true, gap: "gap-1", margin: "mr-[13px]", art: (
      <Icon className={navSize}>
        <rect x="3" y="3" width="58" height="58" fill="url(#steel)" stroke="#555" strokeWidth="5" />
        <path d="M16 3v58M27 3v58M38 3v58M49 3v58M3 16h58M3 27h58M3 38h58M3 49h58" stroke="#777" strokeWidth="3" />
      </Icon>
    ),
  },
  {
    name: "Viewports", caret: true, gap: "gap-1", margin: "", art: (
      <Icon className={navSize}>
        <rect x="4" y="7" width="56" height="50" fill="#a4c3ea" stroke={NAVY} strokeWidth="4" />
        <path d="M32 8v48M4 32h56" stroke={NAVY} strokeWidth="4" />
        <path d="M12 16h12v8H12zM41 16h12v8H41zM12 41h12v8H12zM41 41h12v8H41z" fill="#a9c6ea" stroke="#5f86bb" strokeWidth="3" />
      </Icon>
    ),
  },
];

function NavBar() {
  return (
    <div className="flex h-12 items-center bg-[#f1f1f1] pr-[25px] pl-[6px]">
      {navItems.map((n) => (
        <button key={n.name} aria-label={n.name} className={"flex items-center " + (n.gap || "gap-[10px]") + " " + n.margin}>
          {n.art}
          {n.caret && <Caret />}
        </button>
      ))}
    </div>
  );
}

/* ---------- timeline ---------- */

const players = [
  ["To start", "M0 0h4v28H0zM26 1v27L4 14z"],
  ["Step back", "M18 0v28L0 14zM20 7h5v14h-5z"],
  ["Play", "M2 0l24 14L2 28z"],
  ["Step forward", "M0 7h5v14H0zM7 0l18 14L7 28z"],
  ["To end", "M22 0h4v28h-4zM0 1l22 13L0 28z"],
];

const tl = "h-8 w-8";
const moveArt = (
  <Icon className={tl}>
    <path d="M32 0l10 13h-7v10h-6V13h-7zM32 64l10-13h-7V41h-6v10h-7zM0 32l13-12v8h9v8h-9v8zM64 32L51 20v8h-9v8h9v8z" fill="#474747" />
    <rect x="27" y="26" width="10" height="12" rx="4" fill="#fff" stroke="#474747" strokeWidth="4" />
  </Icon>
);
const features = [
  ["Canvas", <Icon className={tl} key="a"><rect x="2" y="2" width="60" height="60" fill="url(#sky)" /><circle cx="46" cy="18" r="7" fill="#fbe38a" /><path d="M3 40l16-12 14 15 12-10 17 28H3z" fill="#a3acb7" /><path d="M3 40l16-12 24 33H3z" fill="#5d6474" /><rect x="2" y="2" width="60" height="60" stroke="#5b626b" strokeWidth="4" /></Icon>],
  ["Form", <Icon className={tl} key="b"><path d="M2 20C4 8 14 2 32 2s30 6 30 18v26c0 10-10 16-28 16H14C6 62 2 56 2 48z" fill="url(#violet)" stroke="#7a3fae" strokeWidth="4" /><path d="M3 18h34c14 0 20-4 24-8M3 33h34c14 0 20-4 24-8M3 47h34c14 0 20-4 24-8M16 18v44M32 5v56M46 5v54" stroke="#6f349f" strokeWidth="3" /></Icon>],
  ["Boundary fill", <Icon className={tl} key="c"><path d="M4 22L22 3h22l18 22v36H18L4 44z" fill="url(#pale)" stroke="#4c4c4c" strokeWidth="4" /><path d="M4 30L24 4l16 8-18 30z" fill="#8fb2e0" stroke={NAVY} strokeWidth="4" /></Icon>],
  ["Extrude", <Icon className={tl} key="d"><path d="M3 18L20 3h41v42L46 61H3z" fill="url(#blue)" stroke={NAVY} strokeWidth="4" /><path d="M5 18L21 5h38L46 18z" fill="#cfe1f3" /><path d="M46 18v41" stroke="#cfe1f3" strokeWidth="3" /></Icon>],
  ["Move 1", moveArt],
  ["Move 2", moveArt],
  ["Move 3", moveArt],
  ["Body", <Icon className={tl} key="e"><path d="M3 18L18 3h43v43L46 61H3z" fill="url(#pale)" stroke="#4c4c4c" strokeWidth="4" /><path d="M47 18L58 6M47 18v40" stroke="#fff" strokeWidth="4" /></Icon>],
  ["Torus", <Icon className={tl} key="f"><circle cx="32" cy="32" r="22" stroke={NAVY} strokeWidth="20" /><circle cx="32" cy="32" r="22" stroke="#8fb4e2" strokeWidth="14" /><circle cx="32" cy="32" r="23" stroke="#cfe2f6" strokeWidth="4" /></Icon>],
];

function Timeline() {
  return (
    <footer className="flex h-[99px] items-start border-t-4 border-[#c9c9c9] bg-[#f1f1f1] pl-[18px]">
      <div className="mt-[34px] flex gap-6">
        {players.map(([name, d]) => (
          <button key={name} aria-label={name}>
            <svg viewBox="0 0 26 28" className="h-7 w-[26px] fill-[#474747]">
              <path d={d} />
            </svg>
          </button>
        ))}
      </div>
      <div className="mt-[30px] ml-[45px]">
        <div className="flex gap-4">
          {features.map(([name, art]) => (
            <button key={name} aria-label={name}>{art}</button>
          ))}
        </div>
        <div className="mt-[6px] mr-[14px] ml-[14px] flex h-[14px] justify-between border-b-4 border-[#c9c9c9]">
          {features.map(([name]) => (
            <span key={name} className="h-[10px] w-1 bg-[#c9c9c9]" />
          ))}
        </div>
      </div>
      <svg viewBox="0 0 24 64" className="mt-[18px] -ml-1 h-16 w-6 fill-[#606060]" aria-hidden="true">
        <path d="M0 0h24v9l-9 9v46H10V18L0 9z" />
      </svg>
      <button aria-label="Timeline settings" className="mt-8 mr-[24px] ml-auto">
        <Gear className="h-8 w-8" />
      </button>
    </footer>
  );
}

/* ---------- page ---------- */

export default function App() {
  return (
    <div className="flex min-h-screen flex-col bg-white pt-[2px] font-['Liberation_Sans',Arial,sans-serif]">
      <Gradients />
      <TopBar />
      <main className="relative flex flex-1 flex-col overflow-hidden">
        <Scene />
        <ViewCube />
        <div className="relative flex flex-1 flex-col">
          <Ribbon />
          <div className="mt-2 flex flex-1 justify-between">
            <aside>
              <DockBar title="BROWSER" collapse />
              <ul className="mt-[10px] flex flex-col gap-2">
                {tree.map((item) => (
                  <TreeRow key={item.name} item={item} />
                ))}
              </ul>
            </aside>
            <PrintPanel />
          </div>
          <div className="grid grid-cols-[1fr_auto_1fr] items-end pb-2">
            <DockBar title="COMMENTS" plus />
            <NavBar />
            <p className="self-center pr-[68px] text-right text-[23px] font-bold text-[#333]">PC Mouse v2</p>
          </div>
        </div>
      </main>
      <Timeline />
    </div>
  );
}
